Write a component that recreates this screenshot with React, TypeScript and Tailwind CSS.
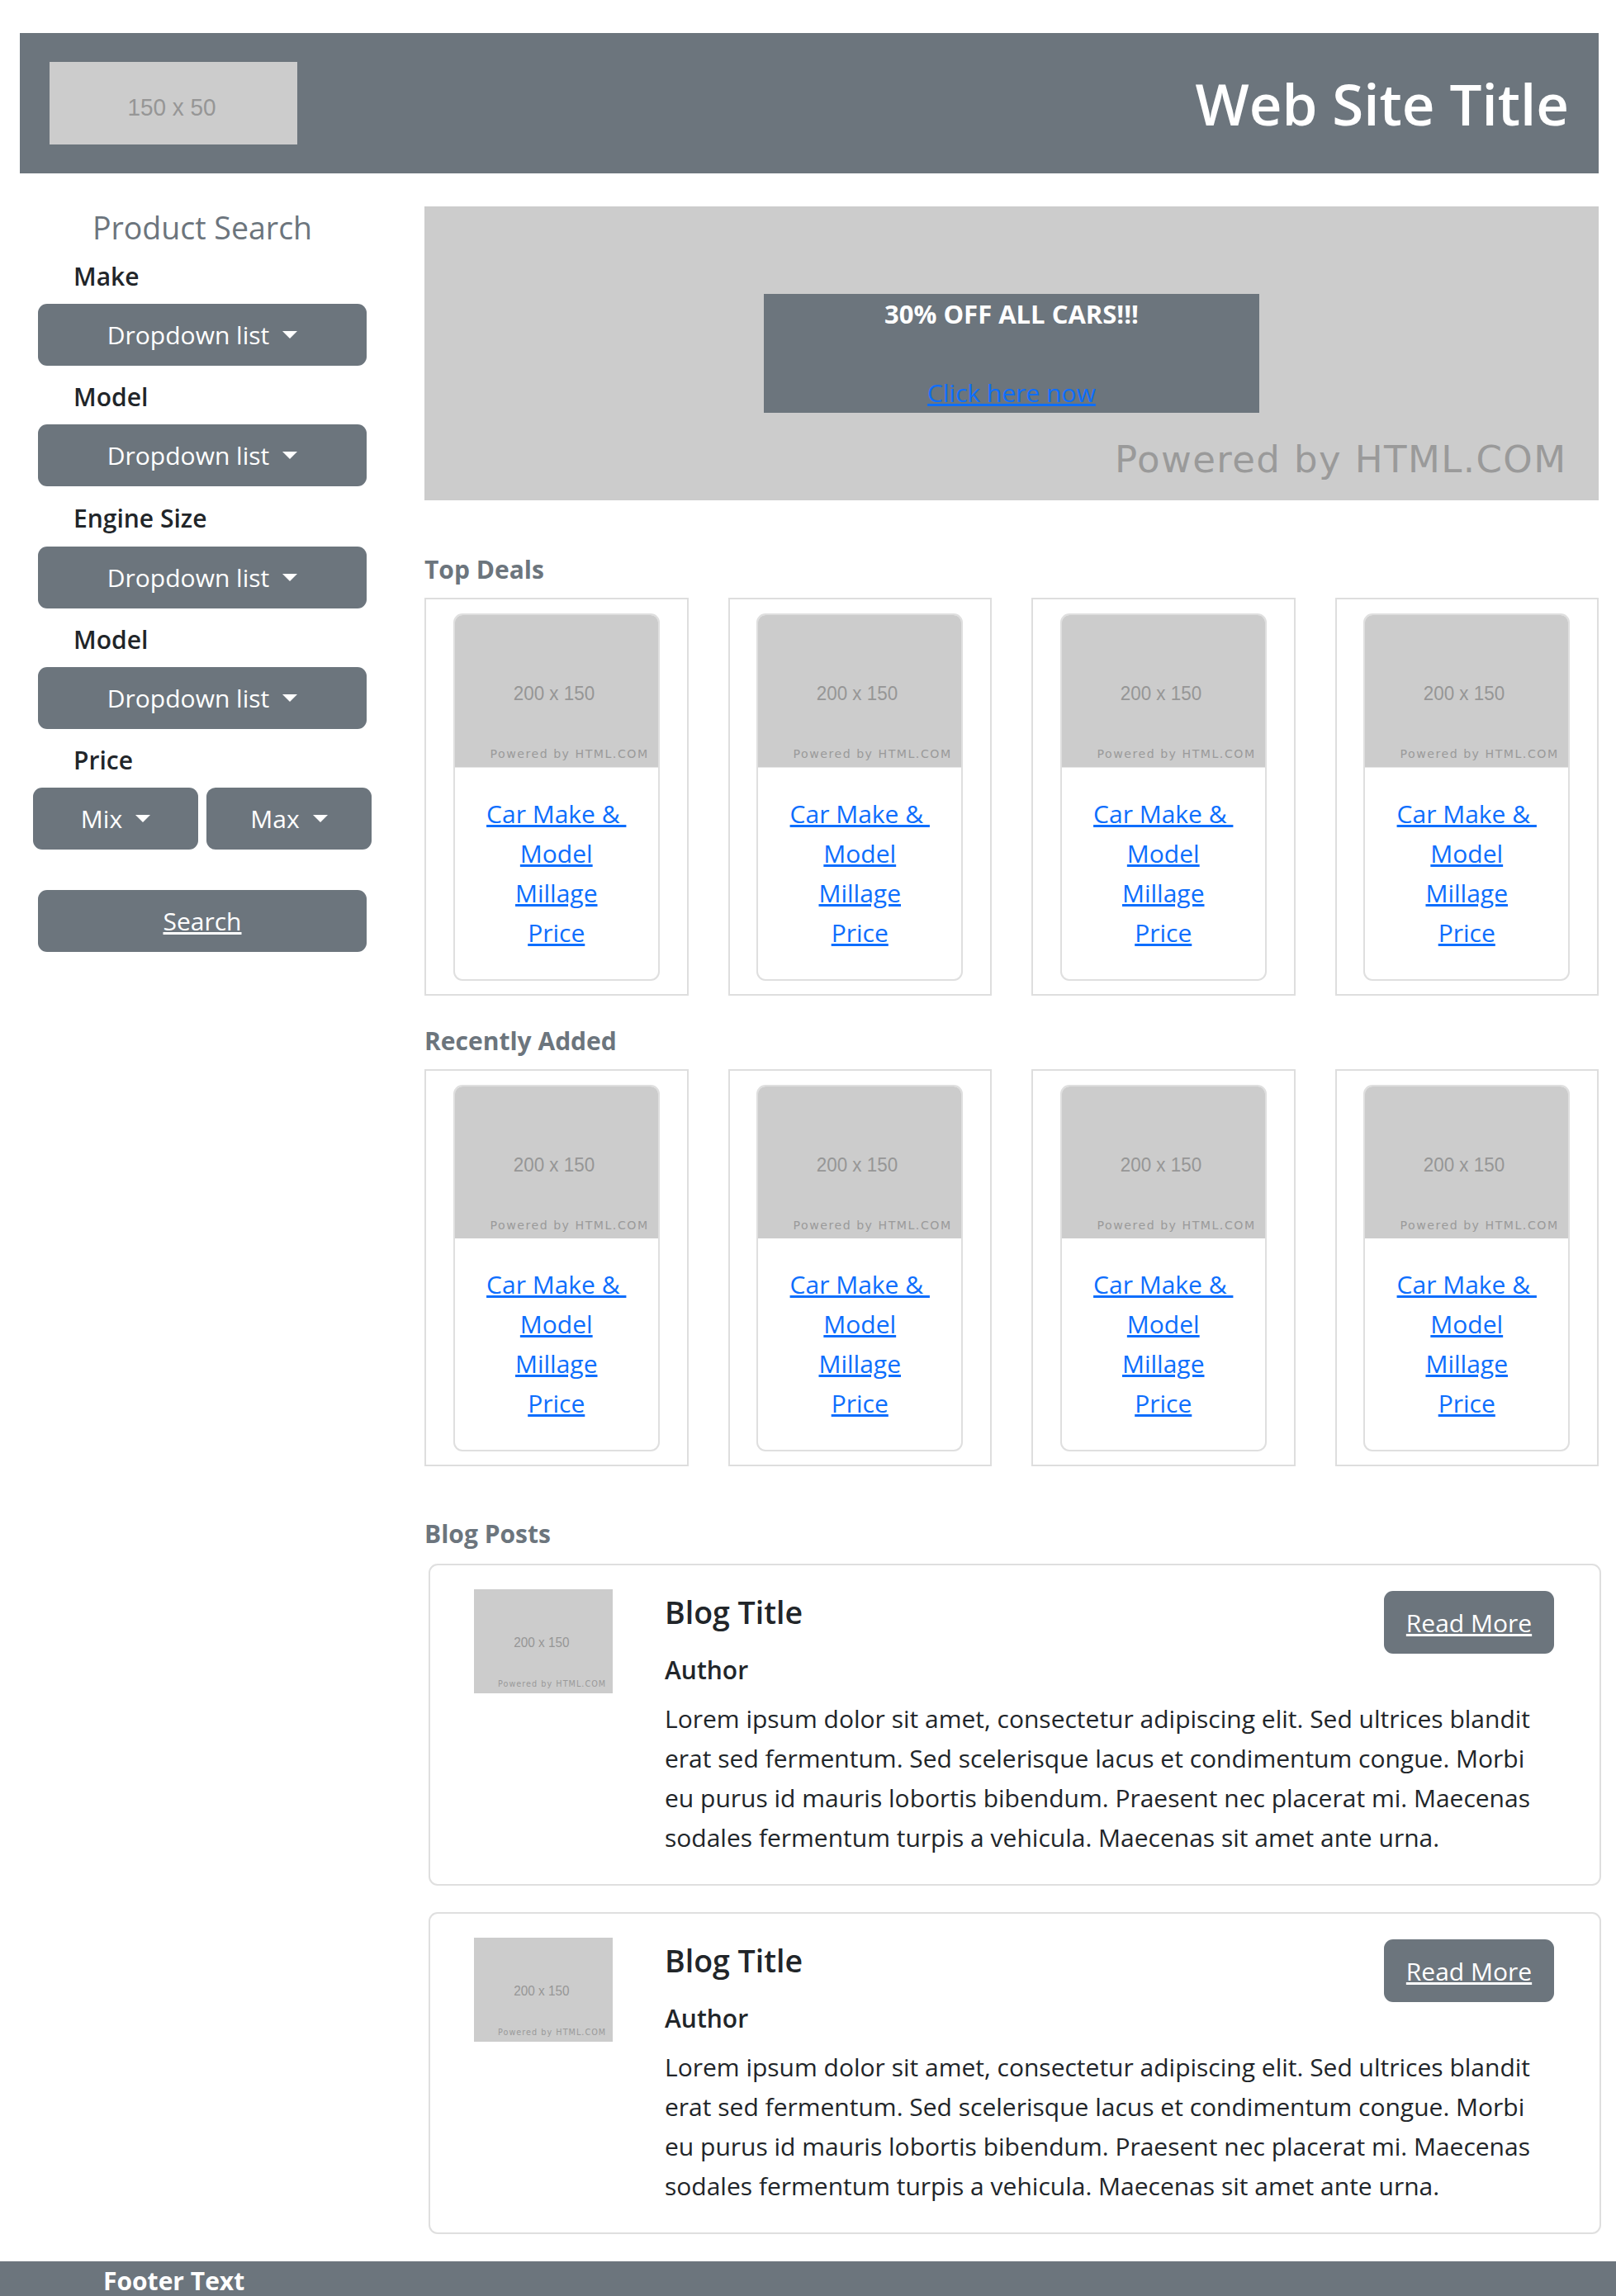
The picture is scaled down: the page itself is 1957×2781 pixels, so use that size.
import { clsx, type ClassValue } from "clsx";
import { twMerge } from "tailwind-merge";

function cn(...inputs: ClassValue[]) {
  return twMerge(clsx(inputs));
}

const lorem = [
  "Lorem ipsum dolor sit amet, consectetur adipiscing elit. Sed ultrices blandit",
  "erat sed fermentum. Sed scelerisque lacus et condimentum congue. Morbi",
  "eu purus id mauris lobortis bibendum. Praesent nec placerat mi. Maecenas",
  "sodales fermentum turpis a vehicula. Maecenas sit amet ante urna.",
];

// grey "200 x 150" placeholder picture, drawn at any width
function PlaceholderImg({ className }: { className?: string }) {
  return (
    <svg viewBox="0 0 200 150" className={cn("block", className)}>
      <rect width="200" height="150" fill="#cccccc" />
      <text
        x="97.5"
        y="83.5"
        textAnchor="middle"
        fontFamily="'Liberation Sans', Arial, sans-serif"
        fontSize="19.5"
        textLength="80"
        lengthAdjust="spacingAndGlyphs"
        fill="#969696"
      >
        200 x 150
      </text>
      <text
        x="189.5"
        y="140.5"
        textAnchor="end"
        fontFamily="'DejaVu Sans', Verdana, sans-serif"
        fontSize="11.5"
        textLength="155"
        lengthAdjust="spacing"
        fill="#9a9a9a"
      >
        Powered by HTML.COM
      </text>
    </svg>
  );
}

function Caret() {
  return (
    <span className="ml-[16px] inline-block border-x-[9.6px] border-t-[9.6px] border-x-transparent border-t-white align-[7px]" />
  );
}

function DropdownButton({
  label,
  className,
}: {
  label: string;
  className?: string;
}) {
  return (
    <button
      type="button"
      className={cn(
        "h-[75px] rounded-[11px] bg-[#6c757d] text-[30px] leading-[48px] text-white",
        className,
      )}
    >
      {label}
      <Caret />
    </button>
  );
}

function FieldLabel({
  children,
  className,
}: {
  children: React.ReactNode;
  className?: string;
}) {
  return (
    <div
      className={cn(
        "pl-[65px] text-[30px] font-semibold leading-[48px] text-[#212529]",
        className,
      )}
    >
      {children}
    </div>
  );
}

function Sidebar() {
  return (
    <aside className="ml-[24px] flex w-[442px] shrink-0 flex-col">
      <h5 className="mt-[2px] text-center text-[37.5px] font-medium leading-[48px] text-[#6c757d]">
        Product Search
      </h5>

      <FieldLabel className="mt-[11px]">Make</FieldLabel>
      <DropdownButton label="Dropdown list" className="mx-[22px] mt-[9px]" />

      <FieldLabel className="mt-[14px]">Model</FieldLabel>
      <DropdownButton label="Dropdown list" className="mx-[22px] mt-[9px]" />

      <FieldLabel className="mt-[15px]">Engine Size</FieldLabel>
      <DropdownButton label="Dropdown list" className="mx-[22px] mt-[10px]" />

      <FieldLabel className="mt-[14px]">Model</FieldLabel>
      <DropdownButton label="Dropdown list" className="mx-[22px] mt-[9px]" />

      <FieldLabel className="mt-[14px]">Price</FieldLabel>
      <div className="mx-[16px] mt-[9px] flex gap-[10px]">
        <DropdownButton label="Mix" className="flex-1" />
        <DropdownButton label="Max" className="flex-1" />
      </div>

      <button
        type="button"
        className="mx-[22px] mt-[49px] h-[75px] rounded-[11px] bg-[#6c757d] text-[30px] leading-[48px] text-white underline"
      >
        Search
      </button>
    </aside>
  );
}

function Banner() {
  return (
    <div className="relative h-[356px] w-full">
      <svg viewBox="0 0 1422 356" className="block h-full w-full">
        <rect width="1422" height="356" fill="#cccccc" />
        <text
          x="1382"
          y="322"
          textAnchor="end"
          fontFamily="'DejaVu Sans', Verdana, sans-serif"
          fontSize="45"
          textLength="546"
          lengthAdjust="spacing"
          fill="#9a9a9a"
        >
          Powered by HTML.COM
        </text>
      </svg>
      <div className="absolute inset-0 flex items-center justify-center">
        <div className="h-[144px] w-[600px] bg-[#6c757d] text-center leading-[48px]">
          <div className="text-[31px] font-bold text-white">
            30% OFF ALL CARS!!!
          </div>
          <div className="h-[48px]" />
          <a href="#" className="text-[30px] text-[#0d6efd] underline">
            Click here now
          </a>
        </div>
      </div>
    </div>
  );
}

function SectionTitle({
  children,
  className,
}: {
  children: React.ReactNode;
  className?: string;
}) {
  return (
    <h6
      className={cn(
        "text-[30px] font-bold leading-[48px] text-[#6c757d]",
        className,
      )}
    >
      {children}
    </h6>
  );
}

function CarCard() {
  return (
    <div className="border-2 border-[#dedede] pb-[16px] pt-[17px]">
      <div className="mx-auto w-[250px] overflow-hidden rounded-[11px] border-2 border-[#dfdfdf]">
        <PlaceholderImg className="w-full" />
        <div className="py-[32px] text-center text-[30px] leading-[48px]">
          <a href="#" className="text-[#0d6efd] underline">
            Car Make &amp;&nbsp;
            <br />
            Model
          </a>
          <br />
          <a href="#" className="text-[#0d6efd] underline">
            Millage
          </a>
          <br />
          <a href="#" className="text-[#0d6efd] underline">
            Price
          </a>
        </div>
      </div>
    </div>
  );
}

function CarRow({ className }: { className?: string }) {
  return (
    <div className={cn("grid grid-cols-4 gap-x-[48px]", className)}>
      {[0, 1, 2, 3].map((i) => (
        <CarCard key={i} />
      ))}
    </div>
  );
}

function BlogCard({ className }: { className?: string }) {
  return (
    <div
      className={cn(
        "ml-[5px] w-[1420px] rounded-[11px] border-2 border-[#dfdfdf] pb-[32px] pl-[53px] pr-[55px] pt-[29px]",
        className,
      )}
    >
      <div className="flex items-start">
        <PlaceholderImg className="w-[168px] shrink-0" />
        <div className="ml-[63px] mt-[2px] flex-1">
          <div className="flex items-start justify-between">
            <h5 className="mt-[2px] text-[37.5px] font-semibold leading-[48px] text-[#212529]">
              Blog Title
            </h5>
            <a
              href="#"
              className="flex h-[76px] w-[206px] items-center justify-center rounded-[11px] bg-[#6c757d] text-[30px] text-white underline"
            >
              Read More
            </a>
          </div>
          <h6 className="-mt-[4px] text-[30px] font-semibold leading-[48px] text-[#212529]">
            Author
          </h6>
          <p className="mt-[11px] whitespace-nowrap text-[30px] leading-[48px] text-[#212529]">
            {lorem.map((line, i) => (
              <span key={i}>
                {line}
                {i < lorem.length - 1 && <br />}
              </span>
            ))}
          </p>
        </div>
      </div>
    </div>
  );
}

export default function App() {
  return (
    <div className="bg-white font-['Open_Sans','Segoe_UI',sans-serif] text-[#212529]">
      <header className="ml-[24px] mt-[40px] flex h-[170px] w-[1912px] items-center justify-between bg-[#6c757d] pl-[36px] pr-[36px]">
        <svg viewBox="0 0 150 50" className="block h-[100px] w-[300px]">
          <rect width="150" height="50" fill="#cccccc" />
          <text
            x="74"
            y="32.5"
            textAnchor="middle"
            fontFamily="'Liberation Sans', Arial, sans-serif"
            fontSize="15"
            textLength="53.5"
            lengthAdjust="spacingAndGlyphs"
            fill="#969696"
          >
            150 x 50
          </text>
        </svg>
        <h1 className="text-[69px] font-semibold leading-[88px] text-white">
          Web Site Title
        </h1>
      </header>

      <div className="mt-[40px] flex items-start">
        <Sidebar />
        <main className="ml-[48px] w-[1422px] shrink-0">
          <Banner />
          <SectionTitle className="mt-[60px]">Top Deals</SectionTitle>
          <CarRow className="mt-[10px]" />
          <SectionTitle className="mt-[31px]">Recently Added</SectionTitle>
          <CarRow className="mt-[10px]" />
          <SectionTitle className="mt-[58px]">Blog Posts</SectionTitle>
          <BlogCard className="mt-[12px]" />
          <BlogCard className="mt-[32px]" />
        </main>
      </div>

      <footer className="mt-[33px] h-[43px] overflow-hidden bg-[#6c757d] pl-[125px] text-[30px] font-bold leading-[48px] text-white">
        Footer Text
      </footer>
    </div>
  );
}
